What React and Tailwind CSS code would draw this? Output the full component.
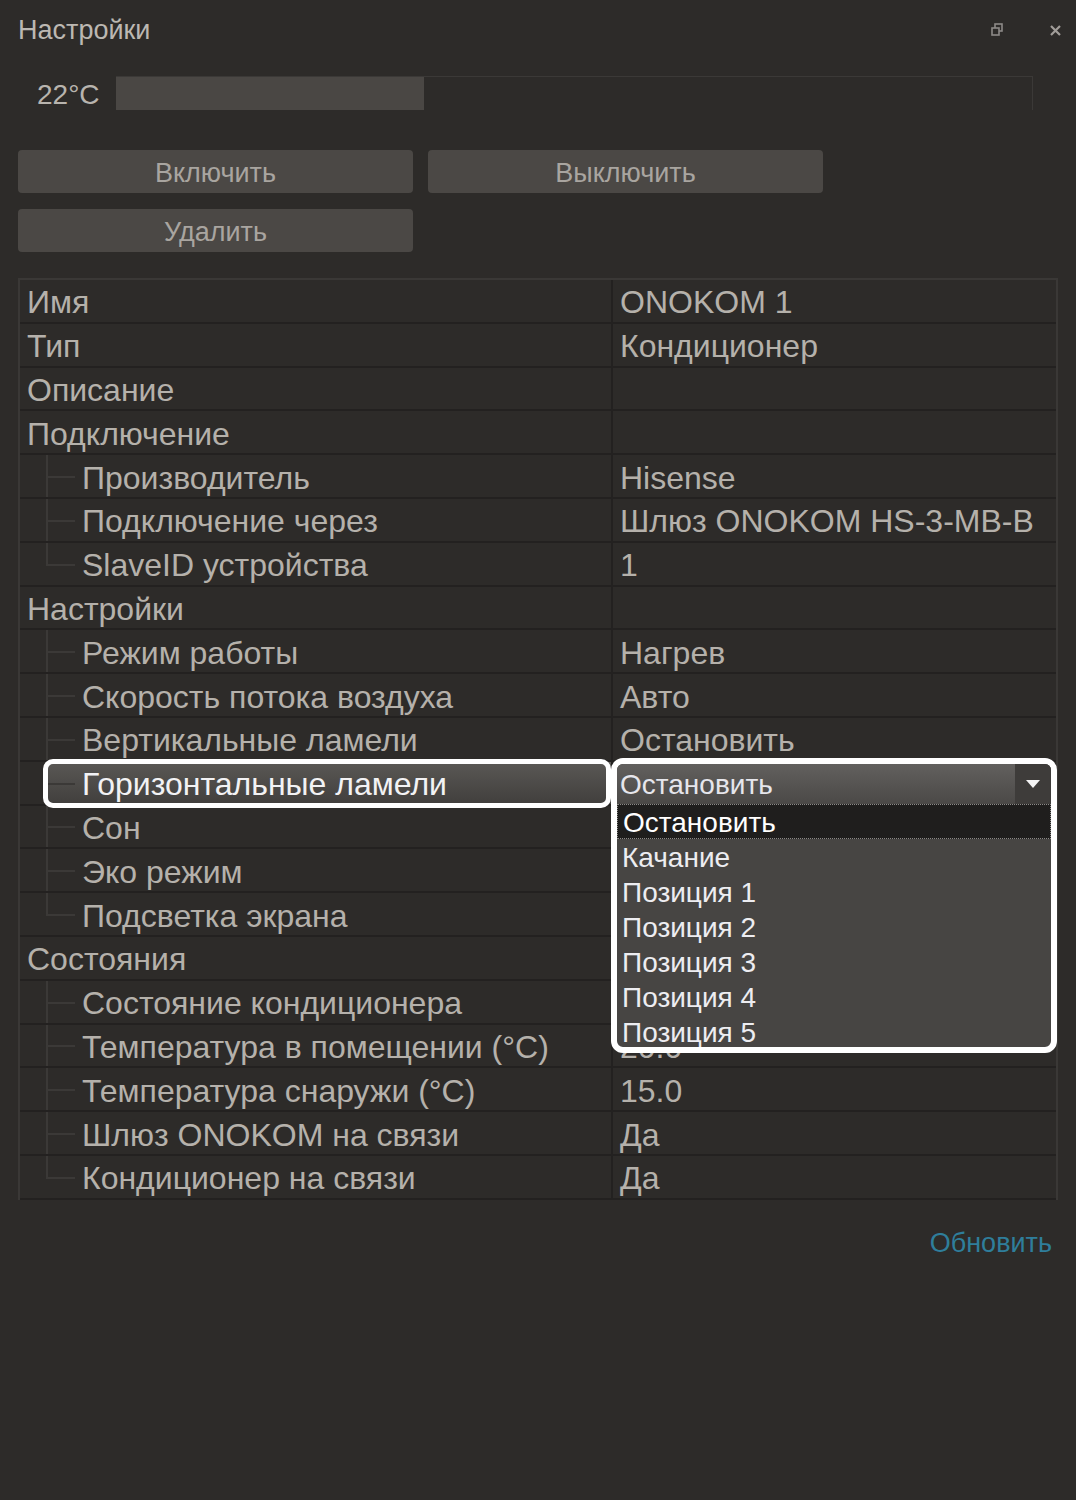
import React from 'react';

const rows = [
  { label: 'Имя', value: 'ONOKOM 1' },
  { label: 'Тип', value: 'Кондиционер' },
  { label: 'Описание', value: '' },
  { label: 'Подключение', value: '' },
  { label: 'Производитель', value: 'Hisense', child: true },
  { label: 'Подключение через', value: 'Шлюз ONOKOM HS-3-MB-B', child: true },
  { label: 'SlaveID устройства', value: '1', child: true, last: true },
  { label: 'Настройки', value: '' },
  { label: 'Режим работы', value: 'Нагрев', child: true },
  { label: 'Скорость потока воздуха', value: 'Авто', child: true },
  { label: 'Вертикальные ламели', value: 'Остановить', child: true },
  { label: 'Горизонтальные ламели', value: '', child: true, selected: true },
  { label: 'Сон', value: '', child: true },
  { label: 'Эко режим', value: '', child: true },
  { label: 'Подсветка экрана', value: '', child: true, last: true },
  { label: 'Состояния', value: '' },
  { label: 'Состояние кондиционера', value: '', child: true },
  { label: 'Температура в помещении (°C)', value: '20.0', child: true },
  { label: 'Температура снаружи (°C)', value: '15.0', child: true },
  { label: 'Шлюз ONOKOM на связи', value: 'Да', child: true },
  { label: 'Кондиционер на связи', value: 'Да', child: true, last: true },
];

const options = ['Остановить', 'Качание', 'Позиция 1', 'Позиция 2', 'Позиция 3', 'Позиция 4', 'Позиция 5'];

const Row = ({ row }) => (
  <div className="flex h-[43.8px] border-b-2 border-[#232120]">
    <div className="relative flex w-[591px] items-center">
      {row.child && (
        <div className="relative h-full w-[62px] shrink-0">
          {row.selected && (
            <div className="absolute inset-y-0 left-[28px] right-0 bg-gradient-to-b from-[#5a5855] to-[#413f3d]" />
          )}
          <div className={`absolute left-[26px] top-0 w-[2px] bg-[#3b3937] ${row.last ? 'h-1/2' : 'h-full'}`} />
          <div className="absolute left-[26px] top-1/2 h-[2px] w-[29px] bg-[#3b3937]" />
        </div>
      )}
      {row.selected ? (
        <div className="flex h-full flex-1 items-center bg-gradient-to-b from-[#5a5855] to-[#413f3d] pr-[5px] pt-[3px] text-[32px] text-[#f2f2f4]">
          {row.label}
        </div>
      ) : (
        <div className={`pt-[3px] text-[32px] text-[#b5b1ab] ${row.child ? '' : 'pl-[7px]'}`}>{row.label}</div>
      )}
    </div>
    <div className="flex flex-1 items-center border-l-2 border-[#232120] pl-[7px] pt-[3px] text-[32px] text-[#b5b1ab]">
      {row.value}
    </div>
  </div>
);

export default function App() {
  return (
    <div className="relative h-[1500px] w-[1076px] bg-[#2d2b29] font-['Liberation_Sans',Arial,sans-serif]">
      {/* header */}
      <div className="flex h-[60px] items-center pl-[18px] pr-[14px]">
        <div className="flex-1 text-[27px] text-[#bcb8b2]">Настройки</div>
        <svg width="14" height="14" viewBox="0 0 14 14" className="mr-[45px]">
          <rect x="5" y="1" width="7" height="7" fill="none" stroke="#8d8a87" strokeWidth="1.6" />
          <rect x="2" y="5" width="7" height="7" fill="#2d2b29" stroke="#8d8a87" strokeWidth="1.6" />
        </svg>
        <svg width="13" height="13" viewBox="0 0 13 13">
          <path d="M2 2 L11 11 M11 2 L2 11" stroke="#a19d99" strokeWidth="2.2" />
        </svg>
      </div>

      {/* temperature slider */}
      <div className="mt-[16px] flex h-[34px]">
        <div className="flex w-[116px] items-center pl-[37px] pt-[3px] text-[28px] text-[#b8b4ae]">22°C</div>
        <div className="mr-[43px] flex flex-1 border-r border-t border-[#3b3937]">
          <div className="w-[308px] bg-[#4a4744]" />
        </div>
      </div>

      {/* buttons */}
      <div className="mt-[40px] grid grid-cols-[395px_395px] gap-x-[15px] gap-y-[16px] px-[18px]">
        <button className="h-[43px] rounded-[4px] bg-[#4b4845] pt-[3px] text-[27px] text-[#a9a5a0]">Включить</button>
        <button className="h-[43px] rounded-[4px] bg-[#4b4845] pt-[3px] text-[27px] text-[#a9a5a0]">Выключить</button>
        <button className="h-[43px] rounded-[4px] bg-[#4b4845] pt-[3px] text-[27px] text-[#a9a5a0]">Удалить</button>
      </div>

      {/* property grid */}
      <div className="mx-[18px] mt-[26px] border-2 border-b-0 border-[#3a3836]">
        {rows.map((row) => (
          <Row key={row.label} row={row} />
        ))}
      </div>

      <div className="mt-[28px] flex justify-end pr-[24px]">
        <span className="text-[27px] leading-[30px] text-[#2f7e9b]">Обновить</span>
      </div>

      {/* highlight around selected row */}
      <div className="absolute left-[43px] top-[759px] h-[49px] w-[568px] rounded-[10px] border-[5px] border-white" />

      {/* open combo box */}
      <div className="absolute left-[611px] top-[758px] h-[295px] w-[446px] overflow-hidden rounded-[12px] border-[6px] border-white bg-[#474543]">
        <div className="flex h-[40px] bg-gradient-to-b from-[#62605e] to-[#4b4947]">
          <div className="flex flex-1 items-center pl-[3px] pt-[2px] text-[28px] text-[#e6e6ec]">Остановить</div>
          <div className="flex w-[36px] items-center justify-center bg-[#3e3c3a]">
            <svg width="14" height="8" viewBox="0 0 14 8">
              <path d="M0 0 H14 L7 8 Z" fill="#f4f4f4" />
            </svg>
          </div>
        </div>
        {options.map((opt, i) => (
          <div
            key={opt}
            className={`flex h-[35px] items-center pl-[5px] pt-[2px] text-[28px] ${
              i === 0 ? 'border border-dotted border-[#8c8a88] bg-[#1f1e1d] text-white' : 'text-[#ededf1]'
            }`}
          >
            {opt}
          </div>
        ))}
      </div>
    </div>
  );
}
